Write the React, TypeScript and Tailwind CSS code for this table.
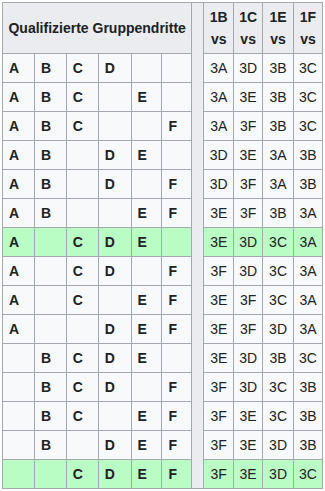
const ROWS: { groups: string; vs: string[]; hit?: boolean }[] = [
  { groups: 'ABCD', vs: ['3A', '3D', '3B', '3C'] },
  { groups: 'ABCE', vs: ['3A', '3E', '3B', '3C'] },
  { groups: 'ABCF', vs: ['3A', '3F', '3B', '3C'] },
  { groups: 'ABDE', vs: ['3D', '3E', '3A', '3B'] },
  { groups: 'ABDF', vs: ['3D', '3F', '3A', '3B'] },
  { groups: 'ABEF', vs: ['3E', '3F', '3B', '3A'] },
  { groups: 'ACDE', vs: ['3E', '3D', '3C', '3A'], hit: true },
  { groups: 'ACDF', vs: ['3F', '3D', '3C', '3A'] },
  { groups: 'ACEF', vs: ['3E', '3F', '3C', '3A'] },
  { groups: 'ADEF', vs: ['3E', '3F', '3D', '3A'] },
  { groups: 'BCDE', vs: ['3E', '3D', '3B', '3C'] },
  { groups: 'BCDF', vs: ['3F', '3D', '3C', '3B'] },
  { groups: 'BCEF', vs: ['3F', '3E', '3C', '3B'] },
  { groups: 'BDEF', vs: ['3F', '3E', '3D', '3B'] },
  { groups: 'CDEF', vs: ['3F', '3E', '3D', '3C'], hit: true },
]

const LETTERS = ['A', 'B', 'C', 'D', 'E', 'F']
const LEFT_W = ['w-[32px]', 'w-[32px]', 'w-[32px]', 'w-[33px]', 'w-[31px]', 'w-[30px]']
const RIGHT_W = ['w-[30px]', 'w-[29px]', 'w-[31px]', 'w-[29px]']
const WINNERS = ['1B', '1C', '1E', '1F']

export default function App() {
  return (
    <div className="min-h-screen bg-white p-[2px] text-[14px] text-[#202122] font-['Liberation_Sans',Arial,sans-serif]">
      <table className="border-collapse table-fixed">
        <colgroup>
          {LEFT_W.map((w, i) => (
            <col key={i} className={w} />
          ))}
          <col className="w-[12px]" />
          {RIGHT_W.map((w, i) => (
            <col key={i} className={w} />
          ))}
        </colgroup>
        <tbody>
          <tr className="h-[51px]">
            <th colSpan={6} className="border border-[#a2a9b1] bg-[#eaecf0] font-bold text-center leading-[22px] p-0">
              Qualifizierte Gruppendritte
            </th>
            {/* Trennspalte */}
            <th rowSpan={16} className="border border-[#a2a9b1] bg-[#eaecf0] p-0" />
            {WINNERS.map((w) => (
              <th key={w} className="border border-[#a2a9b1] bg-[#eaecf0] font-bold text-center leading-[22px] p-0">
                {w}
                <br />
                vs
              </th>
            ))}
          </tr>
          {ROWS.map((r) => {
            const bg = r.hit ? 'bg-[#b9fcc4]' : 'bg-[#f8f9fa]'
            return (
              <tr key={r.groups} className="h-[29px]">
                {LETTERS.map((l) => (
                  <td key={l} className={`border border-[#a2a9b1] ${bg} font-bold pl-[6px] py-0 leading-[20px]`}>
                    {r.groups.includes(l) ? l : ''}
                  </td>
                ))}
                {r.vs.map((v, i) => (
                  <td key={i} className={`border border-[#a2a9b1] ${bg} text-center p-0 leading-[20px]`}>
                    {v}
                  </td>
                ))}
              </tr>
            )
          })}
        </tbody>
      </table>
    </div>
  )
}
